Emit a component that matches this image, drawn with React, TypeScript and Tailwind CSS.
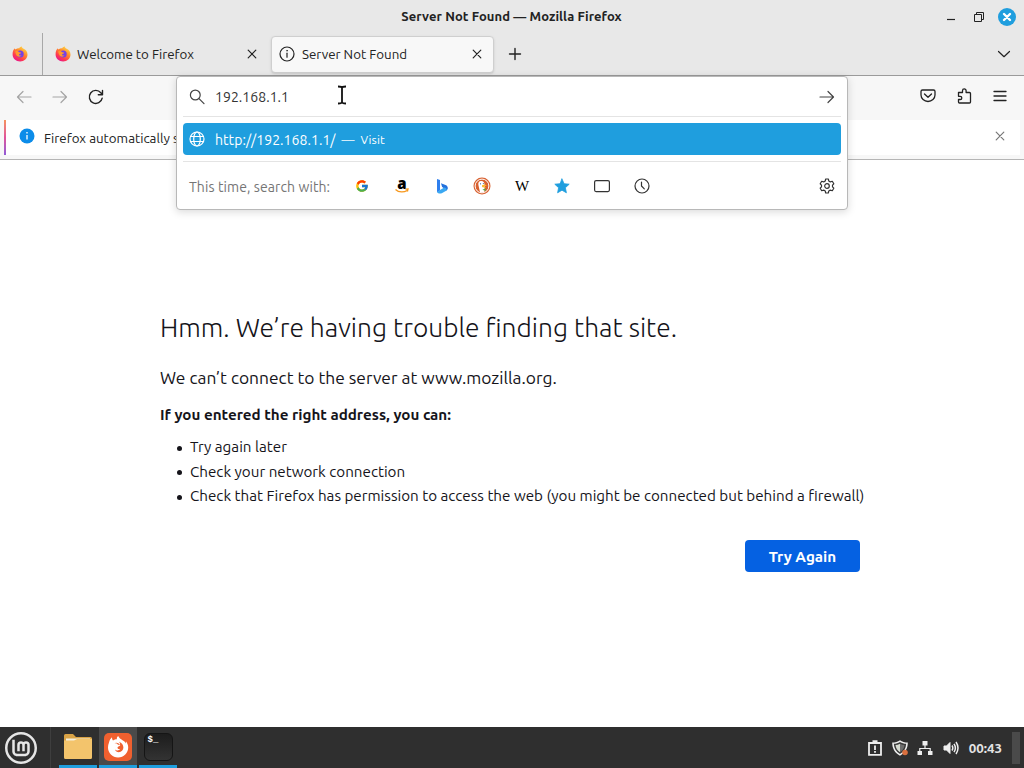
import { Fragment } from "react";
import type { ReactNode } from "react";
import { FcGoogle } from "react-icons/fc";
import { SiLinuxmint } from "react-icons/si";

interface IconProps {
  className?: string;
  children: ReactNode;
}

// 16x16 line icon
function Icon({ className = "", children }: IconProps) {
  return (
    <svg
      viewBox="0 0 16 16"
      className={`size-4 shrink-0 ${className}`}
      fill="none"
      stroke="currentColor"
      strokeWidth="1.2"
      strokeLinecap="round"
      strokeLinejoin="round"
    >
      {children}
    </svg>
  );
}

function CloseIcon({ className = "" }: { className?: string }) {
  return (
    <Icon className={className}>
      <path d="M4.2 4.2l7.6 7.6M11.8 4.2l-7.6 7.6" />
    </Icon>
  );
}

function FirefoxLogo() {
  return (
    <svg viewBox="0 0 16 16" className="size-4 shrink-0">
      <defs>
        <linearGradient id="ff" x1="0.85" y1="0.05" x2="0.25" y2="0.95">
          <stop offset="0" stopColor="#ffe04a" />
          <stop offset="0.4" stopColor="#ff8a2c" />
          <stop offset="0.75" stopColor="#ff3a50" />
          <stop offset="1" stopColor="#e8188c" />
        </linearGradient>
      </defs>
      <path
        d="M1.2 4.4C1.6 3.4 2.2 2.7 2.9 2.2c0 .6.1 1 .3 1.3C4.2 2.7 6 2 7.2 2.2 8 1 9.2.7 9.8.6c-.1.8.4 1.4 1.4 2 2.7 1 4.3 3.2 4.3 5.9 0 4-3.3 7-7.4 7S.6 12.5.6 8.5c0-1.6.1-3 .6-4.1z"
        fill="url(#ff)"
      />
      <circle cx="8.2" cy="8" r="3.5" fill="#7542e5" />
      <path
        d="M3.2 5.4c1.6-.7 3-.2 4 .8 1 .2 1.9.2 2 .5 0 .8-1.9 1-2.2 1.7-.1 1.1 1.3 1.5 2.6.9-.9 1.6-3.3 1.9-4.5.6C4 8.7 3.6 7.3 3.2 5.4z"
        fill="#ff9a2e"
      />
    </svg>
  );
}

function InfoIcon() {
  return (
    <Icon>
      <circle cx="8" cy="8" r="7" />
      <path d="M8 7.2v4" />
      <circle cx="8" cy="4.7" r=".5" fill="currentColor" strokeWidth=".5" />
    </Icon>
  );
}

function TitleBar() {
  return (
    <div className="flex h-[33px] items-center">
      <div className="flex-1 pl-[7px]" />
      <div className="text-[13px] font-bold tracking-[0.08px]">Server Not Found — Mozilla Firefox</div>
      <div className="flex flex-1 items-center justify-end gap-[13px] pr-2">
        <svg viewBox="0 0 10 10" className="size-[10px]" stroke="#222" strokeWidth="1.2">
          <path d="M1 7.5h8" />
        </svg>
        <svg viewBox="0 0 12 12" className="ml-1 size-3" fill="none" stroke="#222" strokeWidth="1">
          <path d="M1.5 3.5h7v7h-7zM3.5 3.5v-2h7v7h-2" />
        </svg>
        <svg viewBox="0 0 18 18" className="size-[18px]">
          <circle cx="9" cy="9" r="9" fill="#1f9ede" />
          <path d="M6 6l6 6M12 6l-6 6" stroke="#fff" strokeWidth="2.4" strokeLinecap="round" />
        </svg>
      </div>
    </div>
  );
}

function TabBar() {
  return (
    <div className="flex h-[43px] items-center border-b border-[#9a9a9a]">
      <div className="flex h-full w-[43px] items-center border-r border-[#a8a8a8] pl-3">
        <FirefoxLogo />
      </div>
      <div className="flex w-[227px] items-center pl-3">
        <FirefoxLogo />
        <span className="flex-1 pt-0.5 pl-1.5 text-[13.33px]">Welcome to Firefox</span>
        <CloseIcon className="mr-2.5" />
      </div>
      <div className="ml-px flex h-[37px] w-[223px] items-center rounded border border-[#cfcfcf] bg-[#f8f8f8] pr-2 pl-[7px] shadow-sm">
        <InfoIcon />
        <span className="flex-1 pt-0.5 pl-[7px] text-[13.33px]">Server Not Found</span>
        <CloseIcon />
      </div>
      <Icon className="ml-[13px]">
        <path d="M8 2.5v11M2.5 8h11" strokeWidth="1.4" />
      </Icon>
      <div className="flex-1" />
      <Icon className="mr-3">
        <path d="M2.5 5.5L8 10.7l5.5-5.2" />
      </Icon>
    </div>
  );
}

function ToolBar() {
  return (
    <div className="flex h-11 items-center bg-[#f7f7f7] px-4 pb-[3px]">
      <div className="flex gap-5">
        <Icon className="text-[#a5a5a5]">
          <path d="M15 8H1.5M7 2.5L1.5 8 7 13.5" />
        </Icon>
        <Icon className="text-[#a5a5a5]">
          <path d="M1 8h13.5M9 2.5L14.5 8 9 13.5" />
        </Icon>
        <Icon>
          <path d="M14.2 9.2A6.5 6.5 0 1 1 12.8 3.7l1.4 1.5M14.5 1.5v4.2h-4.2" strokeWidth="1.4" />
        </Icon>
      </div>
      <div className="flex-1" />
      <div className="flex gap-5">
        <Icon className="-mt-px">
          <path d="M2.5 2h11A1.5 1.5 0 0 1 15 3.5V7A7 6.5 0 0 1 1 7V3.5A1.5 1.5 0 0 1 2.5 2zM4.5 6L8 9.3 11.5 6" strokeWidth="1.3" />
        </Icon>
        <Icon className="-mt-px">
          <path d="M2.5 4.5h4V2.7a1.8 1.8 0 0 1 3.6 0v1.8h3.4a1 1 0 0 1 1 1V14a1 1 0 0 1-1 1h-10a1 1 0 0 1-1-1v-2.5h1.7a1.6 1.6 0 0 0 0-3.2H2.5z" strokeWidth="1.3" />
        </Icon>
        <Icon className="-mt-px">
          <path d="M2 3.5h12M2 8h12M2 12.5h12" strokeWidth="1.3" />
        </Icon>
      </div>
    </div>
  );
}

function NotificationBar() {
  return (
    <div className="h-10 border-b border-[#b5b5b5] bg-[#f7f7f7] px-1">
      <div className="flex h-[35px] items-center bg-white">
        <div className="h-full w-0.5 bg-linear-to-b from-[#f5925a] via-[#e0529a] to-[#9059d8]" />
        <svg viewBox="0 0 16 16" className="mb-[3px] ml-[13px] size-4">
          <circle cx="8" cy="8" r="7.5" fill="#0c8ce9" />
          <path d="M8 7v4.5M8 4v1.4" stroke="#fff" strokeWidth="1.3" />
        </svg>
        <span className="pt-0.5 pl-[9px] text-[13.33px] whitespace-nowrap">Firefox automatically s</span>
        <div className="flex-1" />
        <CloseIcon className="mb-[3px] mr-3 text-[#777]" />
      </div>
    </div>
  );
}

function AmazonLogo() {
  return (
    <span className="relative flex size-4 justify-center font-['Open_Sans',sans-serif] text-[15px] leading-[10px] font-extrabold text-black">
      a
      <svg viewBox="0 0 16 16" className="absolute inset-0 size-4" fill="none" stroke="#f7981d">
        <path d="M1.5 11.5c3.5 3.2 8.5 3 11.5 1M11.5 11.2l2.5-.2-.6 2.5" strokeWidth="1.3" />
      </svg>
    </span>
  );
}

function BingLogo() {
  return (
    <svg viewBox="0 0 16 16" className="size-4">
      <path d="M3 1l3 1.1v10.3l-3 1.8z" fill="#2f7fee" />
      <path d="M7 5.3l4.5 1.6c1.7.6 2.5 2 2.3 3.6-.2 1-.8 1.7-1.6 2.2L9 9.5l-.9-.5z" fill="#2371dd" />
      <path d="M3 13.9l3-2 4.3-2.3c2.3.3 3 1.8 1.9 3.1l-4.4 2.5c-1.6.8-3.9.4-4.8-1.3z" fill="#3aa8f2" />
    </svg>
  );
}

function DuckLogo() {
  return (
    <svg viewBox="0 0 18 18" className="-mx-px size-[18px]">
      <circle cx="9" cy="9" r="8.5" fill="#d8602f" />
      <circle cx="9" cy="9" r="6.9" fill="none" stroke="#fff" strokeWidth="1" />
      <path d="M7 15.2L5.5 8.5C4.9 6 5.7 4.4 7.5 4c2.4-.5 4 1 4 3.300l.1 2 .2 5c-1.400 1.200-3.100 1.500-4.800.9z" fill="#fff" />
      <path d="M9 8.3c1.3-.5 3-.6 4.700-.1-.8.8-1.700 1-2.800 1.200.6.5 1.500.6 2.500.6-1.200 1-3.600.8-4.400-.2z" fill="#fcb829" />
      <path d="M9 12.2l3.500 2v-3l-2.600 1.400z" fill="#54a743" />
      <circle cx="7.5" cy="6.8" r=".6" fill="#2d4f8e" />
      <circle cx="10.3" cy="6.6" r=".5" fill="#2d4f8e" />
    </svg>
  );
}

const engines: { name: string; icon: ReactNode }[] = [
  { name: "google", icon: <FcGoogle className="size-4 p-px" /> },
  { name: "amazon", icon: <AmazonLogo /> },
  { name: "bing", icon: <BingLogo /> },
  { name: "duckduckgo", icon: <DuckLogo /> },
  {
    name: "wikipedia",
    icon: <span className="flex w-4 justify-center font-['Liberation_Serif',serif] text-[15px] leading-4 text-black">W</span>,
  },
  {
    name: "bookmarks",
    icon: (
      <Icon className="text-[#1f9ede]">
        <path d="M8 1l2.1 4.7 5.1.5-3.8 3.5 1 5.1L8 12.2l-4.4 2.6 1-5.1L.8 6.2l5.1-.5z" fill="currentColor" strokeWidth=".8" />
      </Icon>
    ),
  },
  {
    name: "tabs",
    icon: (
      <Icon>
        <rect x=".6" y="2.6" width="14.8" height="11" rx="1.5" />
      </Icon>
    ),
  },
  {
    name: "history",
    icon: (
      <Icon>
        <circle cx="8" cy="8" r="7" />
        <path d="M7.5 4v4l2.8 2.8" />
      </Icon>
    ),
  },
];

function UrlPopup() {
  return (
    <div className="absolute top-[76px] left-[176px] flex h-[134px] w-[672px] flex-col rounded border border-[#b8b8b8] bg-white px-1.5 shadow-[0_2px_8px_rgba(0,0,0,0.15)]">
      <div className="flex h-10 items-center border-b border-[#e4e4e4] px-1.5">
        <Icon className="text-[#444]">
          <circle cx="6.3" cy="6" r="4.9" />
          <path d="M10 9.7l5 5" />
        </Icon>
        <span className="flex-1 pt-0.5 pl-2.5 text-[14px] tracking-[0.05px] text-[#333]">192.168.1.1</span>
        <Icon className="text-[#444]">
          <path d="M1 8h13.5M9 2.5L14.5 8 9 13.5" />
        </Icon>
      </div>
      <div className="mt-1.5 flex h-8 items-center rounded bg-[#1f9ede] pl-1.5 text-white">
        <Icon>
          <circle cx="8" cy="8" r="7" />
          <ellipse cx="8" cy="8" rx="3.3" ry="7" />
          <path d="M1.5 5.5h13M1.5 10.5h13" />
        </Icon>
        <span className="pt-0.5 pl-2.5 text-[14px] tracking-[0.05px]">http://192.168.1.1/</span>
        <span className="pt-0.5 pl-1.5 text-[13px] text-white/80">—</span>
        <span className="pt-0.5 pl-1.5 text-[12px] tracking-[0.1px]">Visit</span>
      </div>
      <div className="mt-1.5 flex flex-1 items-center border-t border-[#e4e4e4] px-1.5">
        <span className="w-[165px] pt-[3px] text-[14px] tracking-[0.09px] text-[#757575]">This time, search with:</span>
        <div className="flex items-center gap-6 text-[#333]">
          {engines.map((engine) => (
            <Fragment key={engine.name}>{engine.icon}</Fragment>
          ))}
        </div>
        <div className="flex-1" />
        <Icon className="text-[#333]">
          <path d="M6.7 1h2.6l.5 2 1.5.9 2-.6 1.5 2.5-1.3 1.4v1.6l1.3 1.4-1.5 2.5-2-.6-1.5.9-.5 2H6.7l-.5-2-1.5-.9-2 .6-1.5-2.5 1.3-1.4V7.2L1.2 5.8l1.5-2.500 2 .6L6.200 3z" />
          <circle cx="8" cy="8" r="2.3" />
        </Icon>
      </div>
    </div>
  );
}

function MouseCursor() {
  return (
    <svg viewBox="0 0 12 20" className="absolute top-[85px] left-[336px] h-5 w-3" fill="none" stroke="#111" strokeWidth="1.8">
      <path d="M2 1.5c2 0 4 .2 4 1.5v14c0 1.3-2 1.5-4 1.5M10 1.5c-2 0-4 .2-4 1.5v14c0 1.3 2 1.5 4 1.5" />
    </svg>
  );
}

const suggestions = [
  "Try again later",
  "Check your network connection",
  "Check that Firefox has permission to access the web (you might be connected but behind a firewall)",
];

function ErrorPage() {
  return (
    <main className="flex-1 bg-white pt-[149px] pl-40 text-[#15141a]">
      <div className="w-[700px]">
        <h1 className="text-[26.4px] leading-9 font-light whitespace-nowrap">Hmm. We’re having trouble finding that site.</h1>
        <p className="mt-[21px] text-[17.4px] leading-6">We can’t connect to the server at www.mozilla.org.</p>
        <p className="mt-[14px] text-[15.2px] leading-[22px] font-bold">If you entered the right address, you can:</p>
        <ul className="mt-[9.4px] pl-[30px] text-[15.2px] whitespace-nowrap">
          {suggestions.map((item) => (
            <li key={item} className="-ml-[13px] flex h-[24.4px] items-center">
              <span className="mt-0.5 mr-2 size-[5px] shrink-0 rounded-full bg-[#15141a]" />
              {item}
            </li>
          ))}
        </ul>
        <div className="mt-[31px] flex justify-end">
          <button className="h-8 w-[115px] rounded bg-[#0561e2] pt-[3px] text-[15.2px] font-bold text-white">Try Again</button>
        </div>
      </div>
    </main>
  );
}

function TaskBar() {
  return (
    <footer className="flex h-[41px] items-center bg-[#2f2f2f] text-white">
      <div className="flex w-[51px] items-center self-stretch border-r border-[#3e3e3e] pl-[5px]">
        <SiLinuxmint className="size-8 text-[#e6e6e6]" />
      </div>
      <div className="ml-2 flex gap-0.5 self-stretch">
        <div className="flex w-[38px] justify-center border-b-[3px] border-[#1f9ede] pt-1.5">
          <svg viewBox="0 0 28 26" className="h-[26px] w-7">
            <path d="M0 2.5Q0 1 1.5 1H9l3 3h14.5Q28 4 28 5.5V10H0z" fill="#d9a346" />
            <path d="M2 5.5h24V10H2z" fill="#f5efdc" />
            <path d="M0 7.5h10l3-1.5h15v18.5Q28 26 26.5 26h-25Q0 26 0 24.5z" fill="#f3c46c" />
          </svg>
        </div>
        <div className="flex w-[38px] justify-center border-b-[3px] border-[#1f9ede] bg-[#4a4a4a] pt-1.5">
          <svg viewBox="0 0 28 28" className="size-7">
            <rect width="28" height="28" rx="5" fill="#f0602f" />
            <path
              d="M5 9.5C5.5 7 6.8 5.5 8 4.3c0 1.5.3 2.5 1 3.2 1.2-.8 2.7-1.3 4-1.3-.5-1 0-2.2 1.2-3.2.8 2 2.6 3 4.3 4.3 1.8 1 3 2 3.4 3.2.2-.7.2-1.5 0-2.3 1.5 1.7 2.3 4 2.3 6.3 0 5.5-4.4 9.900-10.100 9.900S4 20 4 14.500c0-1.800.3-3.500 1-5z"
              fill="#fff"
            />
            <path
              d="M10 10.5c1.5-.5 3 0 4 1.2l2.3.4c-.1 1.3-2.5 1.5-2.8 2.5-.2 1.3 1.2 1.9 2.700 1.200-1 1.900-3.600 2.200-5.200.7.6 1.700 2 2.700 3.800 2.700 2.600 0 4.600-2 4.600-4.700 0-2.500-1.600-4.600-4.400-5.700 1 1.300 1.300 2.200 1 3.300-1.500-2.200-3.800-2.900-6-1.600z"
              fill="#f0602f"
            />
          </svg>
        </div>
        <div className="flex w-[38px] justify-center border-b-[3px] border-[#1f9ede] pt-1.5">
          <div className="h-7 w-[29px] rounded-md border border-[#151515] bg-linear-to-b from-[#1d1d1d] to-[#333] pl-[3px] font-['Liberation_Mono',monospace] text-[9px] leading-[13px] font-bold">
            $_
          </div>
        </div>
      </div>
      <div className="flex-1" />
      <div className="flex items-center gap-[9px]">
        <svg viewBox="0 0 16 16" className="size-4" fill="none" stroke="#eee" strokeWidth="1.8">
          <path d="M2 3h12v11.8H2zM8 5.5V10M8 11v1.8" />
          <path d="M5.5 1.5h5" strokeWidth="2.5" />
        </svg>
        <svg viewBox="0 0 16 16" className="size-4">
          <path d="M8 .2c2.2 1.5 4.8 2.3 7.8 2.3 0 6-2.5 10.5-7.8 13.2C2.7 13 .2 8.5.2 2.5 3.2 2.5 5.8 1.7 8 .2z" fill="#eee" />
          <path d="M8 2c1.8 1.1 3.9 1.7 6.2 1.8-.3 4.5-2.2 7.9-6.2 10.2C4 11.7 2.1 8.3 1.8 3.8 4.1 3.7 6.2 3.1 8 2z" fill="#3a3a3a" />
          <path d="M8 3.7C6.5 4.5 5 5 3.5 5.1c.4 3.2 1.8 5.5 4.5 7.2z" fill="#d5dad0" />
          <path d="M8 3.7c1.5.8 3 1.3 4.5 1.4-.4 3.2-1.8 5.5-4.500 7.200z" fill="#6d6d6d" />
          <circle cx="13" cy="12.5" r="2.8" fill="#d9703f" />
        </svg>
        <svg viewBox="0 0 16 16" className="size-4" fill="#eee">
          <path d="M5.5 1h5v4.5h-5zM.5 11H5v4H.5zM11 11h4.5v4H11z" />
          <path d="M8 5v3.5M2.8 11V8.5h10.400V11" fill="none" stroke="#eee" strokeWidth="1.2" />
        </svg>
        <svg viewBox="0 0 16 16" className="ml-px size-4" fill="none" stroke="#eee" strokeWidth="1.5">
          <path d="M1 6h2.5L7 2.5v11L3.5 10H1z" fill="#eee" strokeWidth="1" />
          <path d="M9 5.5q1.6 2.5 0 5M11 3.8q2.8 4.2 0 8.4M13 2q4 6 0 12" />
        </svg>
      </div>
      <span className="px-[10px] pt-0.5 text-[13.33px] font-bold text-[#e4e4e4]">00:43</span>
      <div className="mr-1 h-8 w-2 bg-[#4a4a4a]" />
    </footer>
  );
}

export default function App() {
  return (
    <div className="relative flex h-[768px] w-[1024px] flex-col overflow-hidden bg-[#e8e8e8] font-['Ubuntu','Noto_Sans',sans-serif] text-[#222]">
      <TitleBar />
      <TabBar />
      <ToolBar />
      <NotificationBar />
      <ErrorPage />
      <TaskBar />
      <UrlPopup />
      <MouseCursor />
    </div>
  );
}
